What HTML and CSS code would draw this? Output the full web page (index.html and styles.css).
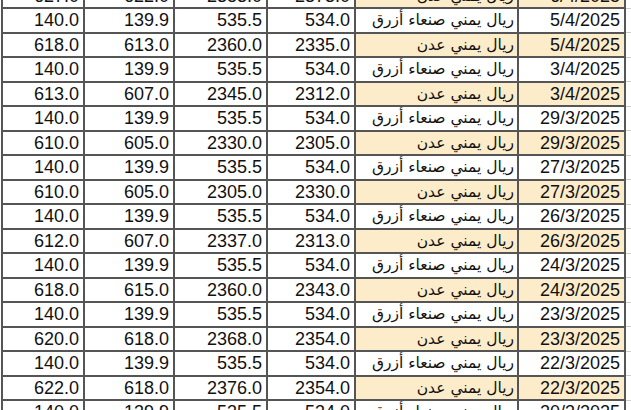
FILE: index.html
```html
<!DOCTYPE html>
<html lang="ar">
<head>
<meta charset="utf-8">
<title>أسعار الصرف</title>
<link rel="stylesheet" href="styles.css">
</head>
<body>
<div class="sheet">
<table class="rates">
<colgroup>
<col class="c-sell"><col class="c-buy"><col class="c-sell2"><col class="c-buy2"><col class="c-cur"><col class="c-date"><col class="c-pad">
</colgroup>
<tbody>
<tr><td>627.0</td><td>622.0</td><td>2383.0</td><td>2373.0</td><td class="cur hl">ريال يمني عدن</td><td class="date hl">6/4/2025</td><td class="pad"></td></tr>
<tr><td>140.0</td><td>139.9</td><td>535.5</td><td>534.0</td><td class="cur">ريال يمني صنعاء أزرق</td><td class="date">5/4/2025</td><td class="pad"></td></tr>
<tr><td>618.0</td><td>613.0</td><td>2360.0</td><td>2335.0</td><td class="cur hl">ريال يمني عدن</td><td class="date hl">5/4/2025</td><td class="pad"></td></tr>
<tr><td>140.0</td><td>139.9</td><td>535.5</td><td>534.0</td><td class="cur">ريال يمني صنعاء أزرق</td><td class="date">3/4/2025</td><td class="pad"></td></tr>
<tr><td>613.0</td><td>607.0</td><td>2345.0</td><td>2312.0</td><td class="cur hl">ريال يمني عدن</td><td class="date hl">3/4/2025</td><td class="pad"></td></tr>
<tr><td>140.0</td><td>139.9</td><td>535.5</td><td>534.0</td><td class="cur">ريال يمني صنعاء أزرق</td><td class="date">29/3/2025</td><td class="pad"></td></tr>
<tr><td>610.0</td><td>605.0</td><td>2330.0</td><td>2305.0</td><td class="cur hl">ريال يمني عدن</td><td class="date hl">29/3/2025</td><td class="pad"></td></tr>
<tr><td>140.0</td><td>139.9</td><td>535.5</td><td>534.0</td><td class="cur">ريال يمني صنعاء أزرق</td><td class="date">27/3/2025</td><td class="pad"></td></tr>
<tr><td>610.0</td><td>605.0</td><td>2305.0</td><td>2330.0</td><td class="cur hl">ريال يمني عدن</td><td class="date hl">27/3/2025</td><td class="pad"></td></tr>
<tr><td>140.0</td><td>139.9</td><td>535.5</td><td>534.0</td><td class="cur">ريال يمني صنعاء أزرق</td><td class="date">26/3/2025</td><td class="pad"></td></tr>
<tr><td>612.0</td><td>607.0</td><td>2337.0</td><td>2313.0</td><td class="cur hl">ريال يمني عدن</td><td class="date hl">26/3/2025</td><td class="pad"></td></tr>
<tr><td>140.0</td><td>139.9</td><td>535.5</td><td>534.0</td><td class="cur">ريال يمني صنعاء أزرق</td><td class="date">24/3/2025</td><td class="pad"></td></tr>
<tr><td>618.0</td><td>615.0</td><td>2360.0</td><td>2343.0</td><td class="cur hl">ريال يمني عدن</td><td class="date hl">24/3/2025</td><td class="pad"></td></tr>
<tr><td>140.0</td><td>139.9</td><td>535.5</td><td>534.0</td><td class="cur">ريال يمني صنعاء أزرق</td><td class="date">23/3/2025</td><td class="pad"></td></tr>
<tr><td>620.0</td><td>618.0</td><td>2368.0</td><td>2354.0</td><td class="cur hl">ريال يمني عدن</td><td class="date hl">23/3/2025</td><td class="pad"></td></tr>
<tr><td>140.0</td><td>139.9</td><td>535.5</td><td>534.0</td><td class="cur">ريال يمني صنعاء أزرق</td><td class="date">22/3/2025</td><td class="pad"></td></tr>
<tr><td>622.0</td><td>618.0</td><td>2376.0</td><td>2354.0</td><td class="cur hl">ريال يمني عدن</td><td class="date hl">22/3/2025</td><td class="pad"></td></tr>
<tr><td>140.0</td><td>139.9</td><td>535.5</td><td>534.0</td><td class="cur">ريال يمني صنعاء أزرق</td><td class="date">20/3/2025</td><td class="pad"></td></tr>
</tbody>
</table>
</div>
</body>
</html>
```
FILE: styles.css
```css
html, body {
  margin: 0;
  padding: 0;
  background: #ffffff;
  overflow: hidden;
}

.sheet {
  width: 631px;
  height: 410px;
  overflow: hidden;
}

.rates {
  direction: ltr;
  border-collapse: collapse;
  table-layout: fixed;
  width: 630px;
  margin-top: -17.5px;
  margin-left: 1px;
  font-family: "Liberation Sans", Arial, sans-serif;
  font-size: 18px;
  color: #111111;
}

.c-sell { width: 82px; }
.c-buy { width: 90px; }
.c-sell2 { width: 93px; }
.c-buy2 { width: 88px; }
.c-cur { width: 163px; }
.c-date { width: 107px; }
.c-pad { width: 7px; }

.rates td {
  height: 24.5px;
  padding: 0 4px 0 0;
  border: 2px solid #555555;
  text-align: right;
  line-height: 20px;
  white-space: nowrap;
  overflow: hidden;
  box-sizing: border-box;
}

.rates td.cur {
  direction: rtl;
  text-align: right;
  padding: 0 3px 0 0;
  font-family: "DejaVu Sans", sans-serif;
  font-size: 15.5px;
}

.rates td.date {
  padding-right: 4px;
}

.rates td.hl {
  background: #fcecc9;
}

.rates td.pad {
  padding: 0;
  border: 1px solid #cccccc;
  border-left: none;
  border-right: none;
}
```
